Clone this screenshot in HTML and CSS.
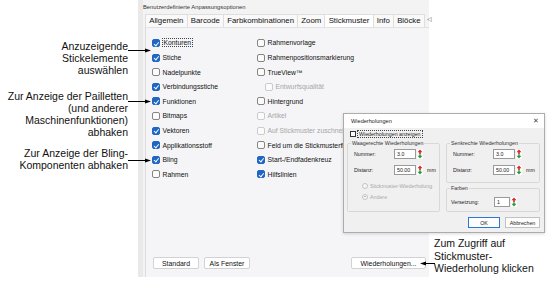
FILE: index.html
```html
<!DOCTYPE html>
<html lang="de">
<head>
  <meta charset="UTF-8" />
  <title>Stickmuster-Optionen</title>
  <link rel="stylesheet" href="styles.css">
</head>
<body>

  <div class="page">

    <!-- Erklärungen links -->
    <div class="notes">
      <div class="note note-1">
        <p>Anzuzeigende<br>Stickelemente<br>auswählen</p>
        <svg class="arrow arrow-1" viewBox="0 0 23 5"><line x1="0" y1="2.5" x2="19" y2="2.5" stroke="#000" stroke-width="1"/><polygon points="17,0.5 23,2.5 17,4.5" fill="#000"/></svg>
      </div>
      <div class="note note-2">
        <p>Zur Anzeige der Pailletten<br>(und anderer<br>Maschinenfunktionen)<br>abhaken</p>
        <svg class="arrow arrow-2" viewBox="0 0 23 5"><line x1="0" y1="2.5" x2="19" y2="2.5" stroke="#000" stroke-width="1"/><polygon points="17,0.5 23,2.5 17,4.5" fill="#000"/></svg>
      </div>
      <div class="note note-3">
        <p>Zur Anzeige der Bling-<br>Komponenten abhaken</p>
        <svg class="arrow arrow-3" viewBox="0 0 23 5"><line x1="0" y1="2.5" x2="19" y2="2.5" stroke="#000" stroke-width="1"/><polygon points="17,0.5 23,2.5 17,4.5" fill="#000"/></svg>
      </div>
    </div>

    <!-- Anpassungsoptionen -->
    <div class="panel">
      <div class="panel-title">Benutzerdefinierte Anpassungsoptionen</div>
      <div class="tabs">
        <span class="tab">Allgemein</span>
        <span class="tab">Barcode</span>
        <span class="tab">Farbkombinationen</span>
        <span class="tab">Zoom</span>
        <span class="tab active">Stickmuster</span>
        <span class="tab">Info</span>
        <span class="tab">Blöcke</span>
        <span class="tab-more">◁</span>
      </div>

      <div class="tab-body">
        <div class="options">
          <label class="opt"><span class="cb on"></span><span class="focus">Konturen</span></label>
          <label class="opt"><span class="cb"></span>Rahmenvorlage</label>

          <label class="opt"><span class="cb on"></span>Stiche</label>
          <label class="opt"><span class="cb"></span>Rahmenpositionsmarkierung</label>

          <label class="opt"><span class="cb"></span>Nadelpunkte</label>
          <label class="opt"><span class="cb"></span>TrueView™</label>

          <label class="opt"><span class="cb on"></span>Verbindungsstiche</label>
          <label class="opt sub off"><span class="cb"></span>Entwurfsqualität</label>

          <label class="opt"><span class="cb on"></span>Funktionen</label>
          <label class="opt"><span class="cb"></span>Hintergrund</label>

          <label class="opt"><span class="cb"></span>Bitmaps</label>
          <label class="opt off"><span class="cb"></span>Artikel</label>

          <label class="opt"><span class="cb on"></span>Vektoren</label>
          <label class="opt off"><span class="cb"></span>Auf Stickmuster zuschneiden</label>

          <label class="opt"><span class="cb on"></span>Applikationsstoff</label>
          <label class="opt"><span class="cb"></span>Feld um die Stickmusterfläche anzeigen</label>

          <label class="opt"><span class="cb on"></span>Bling</label>
          <label class="opt"><span class="cb on"></span>Start-/Endfadenkreuz</label>

          <label class="opt"><span class="cb"></span>Rahmen</label>
          <label class="opt"><span class="cb on"></span>Hilfslinien</label>
        </div>

        <div class="actions">
          <button class="btn">Standard</button>
          <button class="btn">Als Fenster</button>
          <button class="btn btn-wide">Wiederholungen...</button>
        </div>
      </div>
    </div>

    <!-- Erklärung rechts -->
    <div class="aside">
      <div class="callout">
        <svg class="arrow-left" viewBox="0 0 15 5"><polygon points="0,2.5 6,0.5 6,4.5" fill="#000"/><line x1="4" y1="2.5" x2="15" y2="2.5" stroke="#000" stroke-width="1"/></svg>
        <p>Zum Zugriff auf<br>Stickmuster-<br>Wiederholung klicken</p>
      </div>
    </div>

    <!-- Dialog Wiederholungen -->
    <div class="dialog">
      <div class="dlg-title">
        <span>Wiederholungen</span>
        <span class="dlg-close">✕</span>
      </div>
      <div class="dlg-body">
        <label class="show-row"><span class="dcb"></span><span class="focus">Wiederholungen anzeigen</span></label>

        <div class="groups">
          <fieldset class="group group-h">
            <legend>Waagerechte Wiederholungen</legend>
            <div class="field">
              <span class="flabel">Nummer:</span>
              <span class="num">3.0</span>
              <svg class="spin" viewBox="0 0 6 10"><path d="M3 0.5 L5.5 3.2 L3.8 3.2 L3.8 5 L2.2 5 L2.2 3.2 L0.5 3.2 Z" fill="#d8262a"/><path d="M3 9.5 L5.5 6.8 L3.8 6.8 L3.8 5.2 L2.2 5.2 L2.2 6.8 L0.5 6.8 Z" fill="#2f9a3a"/></svg>
            </div>
            <div class="field">
              <span class="flabel">Distanz:</span>
              <span class="num">50.00</span>
              <svg class="spin" viewBox="0 0 6 10"><path d="M3 0.5 L5.5 3.2 L3.8 3.2 L3.8 5 L2.2 5 L2.2 3.2 L0.5 3.2 Z" fill="#d8262a"/><path d="M3 9.5 L5.5 6.8 L3.8 6.8 L3.8 5.2 L2.2 5.2 L2.2 6.8 L0.5 6.8 Z" fill="#2f9a3a"/></svg>
              <span class="unit">mm</span>
            </div>
            <div class="radio off"><span class="rb"></span>Stickmuster-Wiederholung</div>
            <div class="radio off"><span class="rb sel"></span>Andere</div>
          </fieldset>

          <div class="group-col">
            <fieldset class="group group-v">
              <legend>Senkrechte Wiederholungen</legend>
              <div class="field">
                <span class="flabel">Nummer:</span>
                <span class="num">3.0</span>
                <svg class="spin" viewBox="0 0 6 10"><path d="M3 0.5 L5.5 3.2 L3.8 3.2 L3.8 5 L2.2 5 L2.2 3.2 L0.5 3.2 Z" fill="#d8262a"/><path d="M3 9.5 L5.5 6.8 L3.8 6.8 L3.8 5.2 L2.2 5.2 L2.2 6.8 L0.5 6.8 Z" fill="#2f9a3a"/></svg>
              </div>
              <div class="field">
                <span class="flabel">Distanz:</span>
                <span class="num">50.00</span>
                <svg class="spin" viewBox="0 0 6 10"><path d="M3 0.5 L5.5 3.2 L3.8 3.2 L3.8 5 L2.2 5 L2.2 3.2 L0.5 3.2 Z" fill="#d8262a"/><path d="M3 9.5 L5.5 6.8 L3.8 6.8 L3.8 5.2 L2.2 5.2 L2.2 6.8 L0.5 6.8 Z" fill="#2f9a3a"/></svg>
                <span class="unit">mm</span>
              </div>
            </fieldset>

            <fieldset class="group group-c">
              <legend>Farben</legend>
              <div class="field">
                <span class="flabel wide">Versetzung:</span>
                <span class="num short">1</span>
                <svg class="spin" viewBox="0 0 6 10"><path d="M3 0.5 L5.5 3.2 L3.8 3.2 L3.8 5 L2.2 5 L2.2 3.2 L0.5 3.2 Z" fill="#d8262a"/><path d="M3 9.5 L5.5 6.8 L3.8 6.8 L3.8 5.2 L2.2 5.2 L2.2 6.8 L0.5 6.8 Z" fill="#2f9a3a"/></svg>
              </div>
            </fieldset>
          </div>
        </div>

        <div class="dlg-actions">
          <button class="dbtn default">OK</button>
          <button class="dbtn">Abbrechen</button>
        </div>
      </div>
    </div>

  </div>

</body>
</html>
```

FILE: styles.css
```css
* { margin: 0; padding: 0; box-sizing: border-box; }
body {
  font-family: 'Liberation Sans', Arial, sans-serif;
  background: #fff;
  color: #111;
  width: 559px;
  height: 288px;
  overflow: hidden;
}

.page {
  position: relative;
  display: flex;
  height: 288px;
}

/* Erklärungen */
.notes {
  width: 138px;
  flex: none;
}

.note {
  position: relative;
  width: 128px;
  text-align: right;
  font-size: 10.5px;
  line-height: 12px;
  color: #111;
}

.note-1 { margin-top: 40px; }
.note-2 { margin-top: 14px; }
.note-3 { margin-top: 9px; }

.arrow {
  position: absolute;
  left: 128px;
  width: 23px;
  height: 5px;
}

.arrow-1 { top: 8px; }
.arrow-2 { top: 9px; }
.arrow-3 { top: 11px; }

/* Panel */
.panel {
  width: 291px;
  height: 277px;
  flex: none;
  display: flex;
  flex-direction: column;
  background: #f3f3f3;
  border-left: 5px solid #e9e9e9;
}

.panel-title {
  height: 14px;
  line-height: 14px;
  font-size: 5.8px;
  color: #333;
}

.tabs {
  display: flex;
  height: 13px;
  margin-left: 2px;
}

.tab {
  flex: none;
  padding: 0 3.2px;
  font-size: 7.8px;
  line-height: 12px;
  color: #111;
  background: #f9f9f9;
  border: 1px solid #dedede;
  border-left: none;
  border-bottom: none;
  white-space: nowrap;
}

.tab:first-child { border-left: 1px solid #dedede; }

.tab.active { background: #fff; }

.tab-more {
  font-size: 6px;
  line-height: 11px;
  margin-left: 2px;
  color: #555;
}

.tab-body {
  flex: 1;
  display: flex;
  flex-direction: column;
  margin-left: 2px;
  background: #f5f5f7;
  border-left: 1px solid #dcdcdc;
  border-top: 1px solid #e2e2e2;
}

.options {
  display: grid;
  grid-template-columns: 105px 1fr;
  grid-auto-rows: 14.6px;
  padding: 7.7px 0 0 6px;
}

.opt {
  display: flex;
  align-items: center;
  gap: 2.5px;
  font-size: 6.8px;
  white-space: nowrap;
  color: #111;
}

.opt.sub { padding-left: 8px; }
.opt.off { color: #a6a6a6; }

.cb {
  position: relative;
  flex: none;
  width: 8px;
  height: 8px;
  border: 1px solid #858585;
  border-radius: 2px;
  background: #fbfbfb;
}

.opt.off .cb {
  border-color: #cbcbcb;
}

.cb.on {
  border-color: #1f67c3;
  background: #1f67c3;
}

.cb.on::after {
  content: "";
  position: absolute;
  left: 2.2px;
  top: 0.6px;
  width: 1.8px;
  height: 3.8px;
  border-right: 1px solid #fff;
  border-bottom: 1px solid #fff;
  transform: rotate(40deg);
}

.focus {
  outline: 1px dotted #444;
  outline-offset: 0;
  padding: 0 1px;
}

.actions {
  display: flex;
  gap: 5px;
  margin-top: auto;
  padding: 0 3px 8px 7px;
}

.btn {
  width: 46px;
  height: 12px;
  font-family: inherit;
  font-size: 6.9px;
  color: #111;
  background: #fff;
  border: 1px solid #d2d2d2;
  border-radius: 2px;
}

.btn-wide {
  width: 75px;
  margin-left: auto;
}

/* Erklärung rechts */
.aside {
  flex: 1;
  padding: 237px 0 0 5px;
}

.callout {
  position: relative;
  font-size: 10.5px;
  line-height: 12.5px;
  color: #111;
}

.arrow-left {
  position: absolute;
  left: -14px;
  top: 23.5px;
  width: 15px;
  height: 5px;
}

/* Dialog */
.dialog {
  position: absolute;
  left: 343px;
  top: 113px;
  width: 202px;
  height: 120px;
  background: #f0f0f0;
  border: 1px solid #acacac;
  box-shadow: 0 1px 3px rgba(0,0,0,0.15);
  font-size: 5.3px;
  color: #222;
}

.dlg-title {
  display: flex;
  justify-content: space-between;
  align-items: center;
  height: 14px;
  padding: 0 5px 0 7px;
  background: #fff;
  font-size: 5.6px;
}

.dlg-close {
  font-size: 7px;
  color: #444;
}

.dlg-body {
  padding: 0 3px 0 3px;
}

.show-row {
  display: flex;
  align-items: center;
  gap: 2px;
  height: 10px;
  margin-top: 1px;
  padding-left: 3px;
  line-height: 6px;
}

.dcb {
  width: 6px;
  height: 6px;
  border: 1px solid #333;
  background: #fff;
}

.groups {
  display: flex;
  gap: 6px;
  margin-top: 1px;
}

.group {
  border: 1px solid #d8d8d8;
  border-radius: 2px;
  padding: 0 3px;
}

.group legend {
  padding: 0 1px;
  font-size: 5.3px;
  line-height: 6px;
  color: #333;
}

.group-h {
  width: 93px;
  height: 72px;
  padding-top: 2px;
}

.group-col {
  width: 94px;
  display: flex;
  flex-direction: column;
  gap: 2px;
}

.group-v {
  height: 43px;
  padding-top: 2px;
}

.group-c {
  height: 27px;
  padding-top: 5px;
}

.field {
  display: flex;
  align-items: center;
  height: 12px;
  margin-bottom: 4px;
  padding-left: 3px;
}

.group-c .field { padding-left: 1px; }

.flabel { width: 40px; }
.flabel.wide { width: 43px; }

.num {
  width: 22px;
  height: 10px;
  line-height: 8px;
  padding-left: 2px;
  background: #fff;
  border: 1px solid #9a9a9a;
}

.num.short { width: 16px; }

.spin {
  width: 6px;
  height: 10px;
  margin-left: 1px;
  background: #fff;
}

.unit { margin-left: 4px; }

.radio {
  display: flex;
  align-items: center;
  gap: 2px;
  height: 11px;
  padding-left: 11px;
}

.radio.off { color: #a8a8a8; }

.rb {
  width: 6px;
  height: 6px;
  border: 1px solid #c4c4c4;
  border-radius: 50%;
  background: #f7f7f7;
  position: relative;
}

.rb.sel::after {
  content: "";
  position: absolute;
  left: 1.2px;
  top: 1.2px;
  width: 1.6px;
  height: 1.6px;
  border-radius: 50%;
  background: #b0b0b0;
}

.dlg-actions {
  display: flex;
  justify-content: flex-end;
  gap: 5px;
  margin-top: 5px;
  padding-right: 1px;
}

.dbtn {
  width: 32px;
  height: 11px;
  font-family: inherit;
  font-size: 5.3px;
  color: #222;
  background: #fdfdfd;
  border: 1px solid #c2c2c2;
}

.dbtn + .dbtn { width: 35px; }

.dbtn.default { border-color: #2a78d6; }
```
